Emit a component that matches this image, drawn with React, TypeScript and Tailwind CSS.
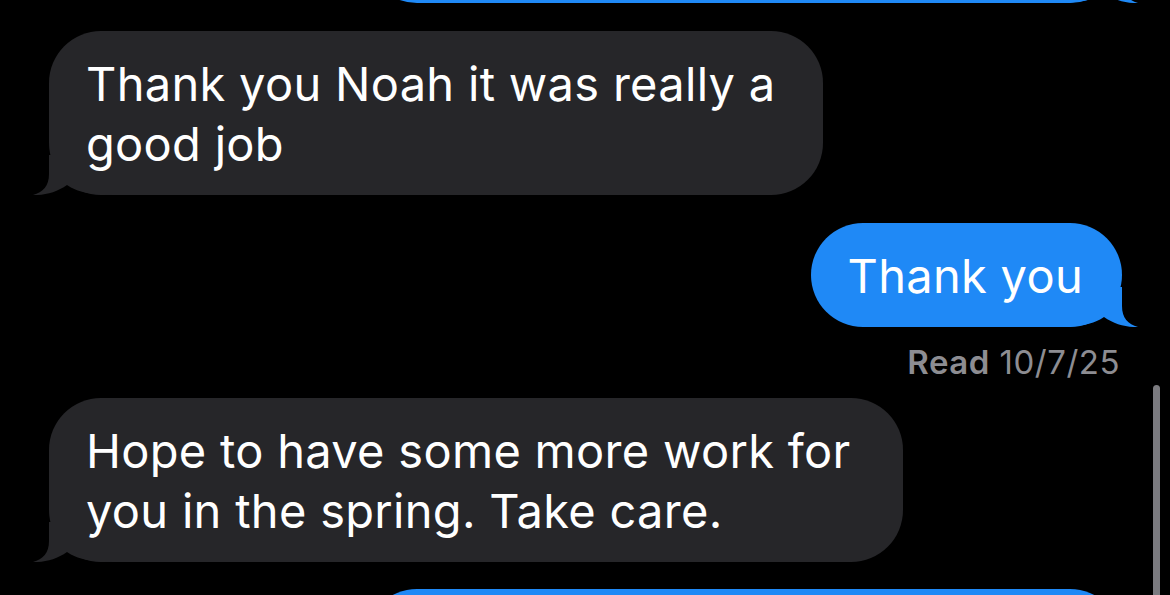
import React from "react";

const GRAY = "#262629";
const BLUE = "#1f89f6";

function LeftTail() {
  return (
    <svg
      className="absolute left-[-16px] bottom-0"
      width="84"
      height="40"
      viewBox="0 0 84 40"
    >
      <path
        d="M16 0 L16 19 C16 31 10 37 0 40 C12 40.5 24 37 34 30 C44 37 58 40 84 40 L84 0 Z"
        fill={GRAY}
      />
    </svg>
  );
}

function RightTail() {
  return (
    <svg
      className="absolute right-[-16px] bottom-0"
      width="84"
      height="40"
      viewBox="0 0 84 40"
    >
      <path
        d="M68 0 L68 19 C68 31 74 37 84 40 C72 40.5 60 37 50 30 C40 37 26 40 0 40 L0 0 Z"
        fill={BLUE}
      />
    </svg>
  );
}

export default function App() {
  return (
    <div
      className="relative w-[1170px] h-[595px] overflow-hidden bg-black"
      style={{ fontFamily: "Inter, 'Noto Sans', sans-serif" }}
    >
      <div className="flex flex-col pl-[49px] pr-[48px]">
        {/* top partial blue bubble */}
        <div className="relative self-end mt-[-101px] h-[104px] w-[757px] rounded-[52px] bg-[#1f89f6]">
          <RightTail />
        </div>

        {/* gray bubble 1 */}
        <div className="relative self-start mt-[28px] w-[774px] rounded-[52px] bg-[#262629] pl-[37px] pr-[20px] pt-[23px] pb-[21px]">
          <LeftTail />
          <p className="relative whitespace-nowrap text-[47px] leading-[60px] text-white tracking-[0.3px]">
            Thank you Noah it was really a
            <br />
            good job
          </p>
        </div>

        {/* blue bubble Thank you */}
        <div className="relative self-end mt-[28px] rounded-[52px] bg-[#1f89f6] pl-[37px] pr-[39px] pt-[23px] pb-[21px]">
          <RightTail />
          <p className="relative whitespace-nowrap text-[47px] leading-[60px] text-white tracking-[0.3px]">
            Thank you
          </p>
        </div>

        {/* read receipt */}
        <div className="self-end mr-[2px] mt-[15px] text-[33px] leading-[40px] tracking-[0.5px] text-[#8d8d92]">
          <span className="font-semibold">Read</span> 10/7/25
        </div>

        {/* gray bubble 2 */}
        <div className="relative self-start mt-[16px] w-[854px] rounded-[52px] bg-[#262629] pl-[37px] pr-[20px] pt-[23px] pb-[21px]">
          <LeftTail />
          <p className="relative whitespace-nowrap text-[47px] leading-[60px] text-white tracking-[0.3px]">
            Hope to have some more work for
            <br />
            you in the spring. Take care.
          </p>
        </div>

        {/* bottom partial blue bubble */}
        <div className="relative self-end mt-[27px] h-[104px] w-[757px] rounded-[52px] bg-[#1f89f6]" />
      </div>

      {/* scroll indicator */}
      <div className="absolute left-[1153px] top-[385px] h-[240px] w-[7px] rounded-full bg-[#7b7b80]" />
    </div>
  );
}
